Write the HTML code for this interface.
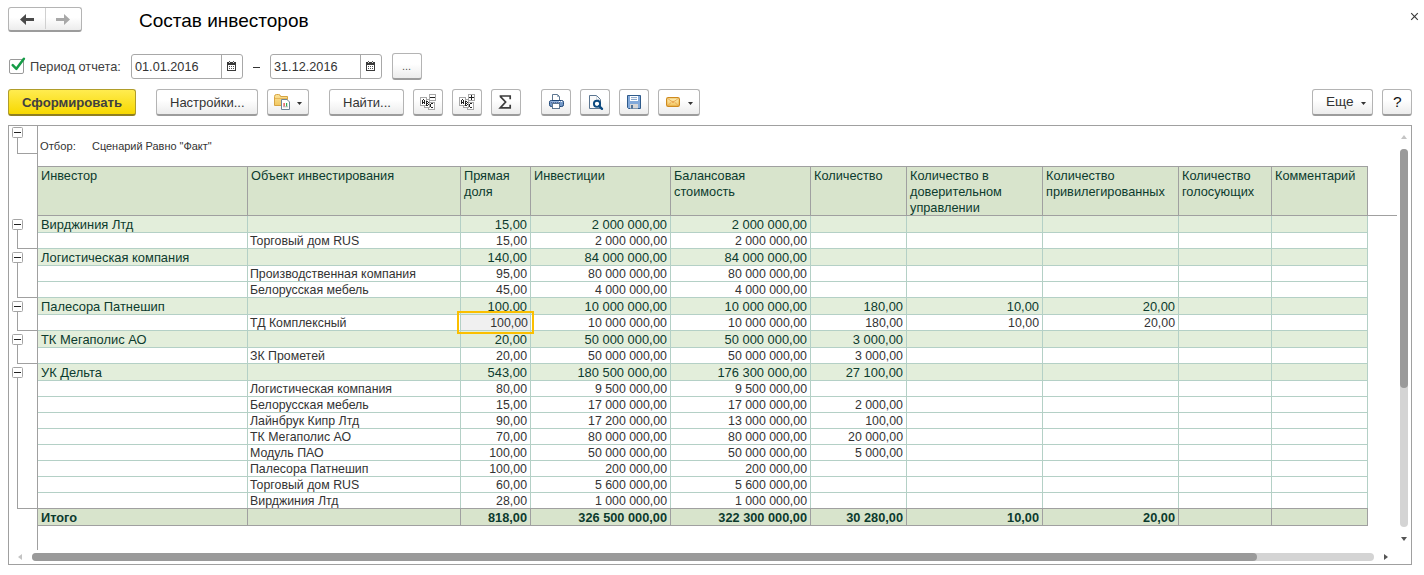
<!DOCTYPE html><html><head><meta charset="utf-8"><title>Состав инвесторов</title><style>
html,body{margin:0;padding:0}
body{width:1424px;height:575px;overflow:hidden;background:#fff;position:relative;font-family:"Liberation Sans",sans-serif}
.a{position:absolute}
.t{position:absolute;white-space:nowrap}
.btn{position:absolute;box-sizing:border-box;border:1px solid #b4b4b4;border-bottom:2px solid #9c9c9c;border-radius:3px;background:linear-gradient(#ffffff 0%,#ffffff 42%,#ececec 100%)}
.inp{position:absolute;box-sizing:border-box;border:1px solid #a8a8a8;border-radius:3px;background:#fff}
</style></head><body>
<div class="btn" style="left:8px;top:7px;width:74px;height:25px"></div>
<div class="a" style="left:45px;top:8px;width:1px;height:21px;background:#d0d0d0"></div>
<svg class="a" style="left:19px;top:13px" width="16" height="13" viewBox="0 0 16 13"><path d="M1 6.5 L7 1 V5 H15 V8 H7 V12 Z" fill="#4a4a4a"/></svg>
<svg class="a" style="left:55px;top:13px" width="16" height="13" viewBox="0 0 16 13"><path d="M15 6.5 L9 1 V5 H1 V8 H9 V12 Z" fill="#a8a8a8"/></svg>
<div class="t" style="left:139px;top:9.5px;font-size:19.0px;line-height:22px;color:#000;font-weight:normal;">Состав инвесторов</div>
<svg class="a" style="left:1410px;top:12px" width="10" height="10" viewBox="0 0 10 10"><path d="M1.2 1.2 L7.8 7.8 M7.8 1.2 L1.2 7.8" stroke="#3a3a3a" stroke-width="1.15"/></svg>
<div class="a" style="left:9px;top:59px;width:15px;height:15px;box-sizing:border-box;border:1px solid #9a9a9a;border-radius:2px;background:#fff"></div>
<svg class="a" style="left:10px;top:56px" width="17" height="17" viewBox="0 0 17 17"><path d="M2.7 9.1 L6.4 12.8 L13.9 2.8" stroke="#159c46" stroke-width="2.5" fill="none" stroke-linecap="round" stroke-linejoin="round"/></svg>
<div class="t" style="left:30px;top:59px;font-size:12.8px;line-height:16px;color:#404040;font-weight:normal;">Период отчета:</div>
<div class="inp" style="left:131px;top:54px;width:112px;height:25px"></div>
<div class="a" style="left:221px;top:55px;width:1px;height:23px;background:#a8a8a8"></div>
<div class="t" style="left:135px;top:59px;font-size:12.7px;line-height:16px;color:#333;font-weight:normal;">01.01.2016</div>
<svg class="a" style="left:227px;top:61px" width="9" height="10" viewBox="0 0 9 10" shape-rendering="crispEdges"><rect x="0" y="1" width="9" height="9" fill="#3a3a3a"/><rect x="1" y="4" width="7" height="5" fill="#fff"/><rect x="2" y="1" width="1" height="1" fill="#ddd"/><rect x="6" y="1" width="1" height="1" fill="#ddd"/><rect x="2" y="0" width="1" height="1" fill="#555"/><rect x="6" y="0" width="1" height="1" fill="#555"/><g fill="#555"><rect x="2" y="5" width="1" height="1"/><rect x="4" y="5" width="1" height="1"/><rect x="6" y="5" width="1" height="1"/><rect x="2" y="7" width="1" height="1"/><rect x="4" y="7" width="1" height="1"/><rect x="6" y="7" width="1" height="1"/></g></svg>
<div class="a" style="left:253px;top:67px;width:7px;height:1px;background:#333"></div>
<div class="inp" style="left:270px;top:54px;width:112px;height:25px"></div>
<div class="a" style="left:360px;top:55px;width:1px;height:23px;background:#a8a8a8"></div>
<div class="t" style="left:274px;top:59px;font-size:12.7px;line-height:16px;color:#333;font-weight:normal;">31.12.2016</div>
<svg class="a" style="left:366px;top:61px" width="9" height="10" viewBox="0 0 9 10" shape-rendering="crispEdges"><rect x="0" y="1" width="9" height="9" fill="#3a3a3a"/><rect x="1" y="4" width="7" height="5" fill="#fff"/><rect x="2" y="1" width="1" height="1" fill="#ddd"/><rect x="6" y="1" width="1" height="1" fill="#ddd"/><rect x="2" y="0" width="1" height="1" fill="#555"/><rect x="6" y="0" width="1" height="1" fill="#555"/><g fill="#555"><rect x="2" y="5" width="1" height="1"/><rect x="4" y="5" width="1" height="1"/><rect x="6" y="5" width="1" height="1"/><rect x="2" y="7" width="1" height="1"/><rect x="4" y="7" width="1" height="1"/><rect x="6" y="7" width="1" height="1"/></g></svg>
<div class="btn" style="left:392px;top:53px;width:30px;height:27px"></div>
<div class="t" style="left:402px;top:59px;font-size:11px;line-height:14px;color:#555;font-weight:normal;">...</div>
<div class="a" style="left:8px;top:89px;width:128px;height:27px;box-sizing:border-box;border:1px solid #b09d2a;border-bottom:2px solid #8f7f22;border-radius:3px;background:linear-gradient(#ffec50,#f7d800)"></div>
<div class="t" style="left:22px;top:95px;font-size:13.15px;line-height:16px;color:#404040;font-weight:bold;">Сформировать</div>
<div class="btn" style="left:156px;top:89px;height:27px;width:102px"></div>
<div class="t" style="left:170px;top:95px;font-size:13.0px;line-height:16px;color:#333;font-weight:normal;">Настройки...</div>
<div class="btn" style="left:267px;top:89px;height:27px;width:42px"></div>
<svg class="a" style="left:273px;top:93px" width="20" height="18" viewBox="0 0 20 18"><defs><linearGradient id="fg" x1="0" y1="0" x2="0" y2="1"><stop offset="0" stop-color="#fbe39a"/><stop offset="1" stop-color="#f1c75f"/></linearGradient></defs><path d="M1.5 3.5 Q1.5 1.5 3.5 1.5 H5.5 Q7.5 1.5 7.5 3.5 H14.5 V12.5 H1.5 Z" fill="url(#fg)" stroke="#d6a443"/><path d="M2 5.5 H14" stroke="#e2b050" stroke-width="0.8"/><path d="M8.5 6.5 H14 L16.5 9 V16.5 H8.5 Z" fill="#fff" stroke="#6f8699" stroke-linejoin="round"/><rect x="10.5" y="10" width="1.2" height="3.5" fill="#e23a3a"/><rect x="13" y="10" width="1.2" height="3.5" fill="#2fae52"/><rect x="10" y="13.5" width="5" height="0.7" fill="#999"/></svg>
<svg class="a" style="left:297px;top:102px" width="5" height="3" viewBox="0 0 5 3"><path d="M0 0 H5 L2.5 3Z" fill="#333"/></svg>
<div class="btn" style="left:329px;top:89px;height:27px;width:75px"></div>
<div class="t" style="left:343px;top:95px;font-size:13.0px;line-height:16px;color:#333;font-weight:normal;">Найти...</div>
<div class="btn" style="left:413px;top:89px;height:27px;width:30px"></div>
<div class="btn" style="left:452px;top:89px;height:27px;width:30px"></div>
<div class="btn" style="left:491px;top:89px;height:27px;width:30px"></div>
<svg class="a" style="left:418px;top:93px" width="19" height="18" viewBox="0 0 19 18" shape-rendering="crispEdges"><rect x="11.5" y="1.5" width="6" height="6" fill="#fff" stroke="#a8a8a8"/><rect x="12" y="4" width="5" height="1" fill="#222"/><rect x="10.5" y="9.5" width="6" height="7" fill="#fff" stroke="#a8a8a8"/><rect x="6.5" y="6.5" width="5" height="8" fill="#fff" stroke="#a8a8a8"/><rect x="2.5" y="4.5" width="6" height="8" fill="#fff" stroke="#a8a8a8"/><rect x="5" y="6" width="1" height="1" fill="#222"/><rect x="4" y="7" width="1" height="1" fill="#222"/><rect x="6" y="7" width="1" height="1" fill="#222"/><rect x="4" y="8" width="1" height="1" fill="#222"/><rect x="6" y="8" width="1" height="1" fill="#222"/><rect x="4" y="9" width="1" height="1" fill="#222"/><rect x="5" y="9" width="1" height="1" fill="#222"/><rect x="6" y="9" width="1" height="1" fill="#222"/><rect x="4" y="10" width="1" height="1" fill="#222"/><rect x="6" y="10" width="1" height="1" fill="#222"/><rect x="8" y="8" width="1" height="1" fill="#222"/><rect x="9" y="8" width="1" height="1" fill="#222"/><rect x="8" y="9" width="1" height="1" fill="#222"/><rect x="10" y="9" width="1" height="1" fill="#222"/><rect x="8" y="10" width="1" height="1" fill="#222"/><rect x="9" y="10" width="1" height="1" fill="#222"/><rect x="8" y="11" width="1" height="1" fill="#222"/><rect x="10" y="11" width="1" height="1" fill="#222"/><rect x="8" y="12" width="1" height="1" fill="#222"/><rect x="9" y="12" width="1" height="1" fill="#222"/><rect x="13" y="10" width="1" height="1" fill="#222"/><rect x="14" y="10" width="1" height="1" fill="#222"/><rect x="12" y="11" width="1" height="1" fill="#222"/><rect x="12" y="12" width="1" height="1" fill="#222"/><rect x="12" y="13" width="1" height="1" fill="#222"/><rect x="13" y="14" width="1" height="1" fill="#222"/><rect x="14" y="14" width="1" height="1" fill="#222"/></svg>
<svg class="a" style="left:457px;top:93px" width="19" height="18" viewBox="0 0 19 18" shape-rendering="crispEdges"><rect x="11.5" y="1.5" width="6" height="6" fill="#fff" stroke="#a8a8a8"/><rect x="12" y="4" width="5" height="1" fill="#222"/><rect x="14" y="2" width="1" height="5" fill="#222"/><rect x="10.5" y="9.5" width="6" height="7" fill="#fff" stroke="#a8a8a8"/><rect x="6.5" y="6.5" width="5" height="8" fill="#fff" stroke="#a8a8a8"/><rect x="2.5" y="4.5" width="6" height="8" fill="#fff" stroke="#a8a8a8"/><rect x="5" y="6" width="1" height="1" fill="#222"/><rect x="4" y="7" width="1" height="1" fill="#222"/><rect x="6" y="7" width="1" height="1" fill="#222"/><rect x="4" y="8" width="1" height="1" fill="#222"/><rect x="6" y="8" width="1" height="1" fill="#222"/><rect x="4" y="9" width="1" height="1" fill="#222"/><rect x="5" y="9" width="1" height="1" fill="#222"/><rect x="6" y="9" width="1" height="1" fill="#222"/><rect x="4" y="10" width="1" height="1" fill="#222"/><rect x="6" y="10" width="1" height="1" fill="#222"/><rect x="8" y="8" width="1" height="1" fill="#222"/><rect x="9" y="8" width="1" height="1" fill="#222"/><rect x="8" y="9" width="1" height="1" fill="#222"/><rect x="10" y="9" width="1" height="1" fill="#222"/><rect x="8" y="10" width="1" height="1" fill="#222"/><rect x="9" y="10" width="1" height="1" fill="#222"/><rect x="8" y="11" width="1" height="1" fill="#222"/><rect x="10" y="11" width="1" height="1" fill="#222"/><rect x="8" y="12" width="1" height="1" fill="#222"/><rect x="9" y="12" width="1" height="1" fill="#222"/><rect x="13" y="10" width="1" height="1" fill="#222"/><rect x="14" y="10" width="1" height="1" fill="#222"/><rect x="12" y="11" width="1" height="1" fill="#222"/><rect x="12" y="12" width="1" height="1" fill="#222"/><rect x="12" y="13" width="1" height="1" fill="#222"/><rect x="13" y="14" width="1" height="1" fill="#222"/><rect x="14" y="14" width="1" height="1" fill="#222"/></svg>
<svg class="a" style="left:497px;top:94px" width="16" height="16" viewBox="0 0 16 16"><path d="M2.6 2 H13.2 V5.2 M3.2 2.3 L8.6 8 L3.2 13.9 H13.2 V10.8" stroke="#3c3c3c" stroke-width="1.7" fill="none" stroke-linejoin="miter"/></svg>
<div class="btn" style="left:541px;top:89px;height:27px;width:30px"></div>
<div class="btn" style="left:580px;top:89px;height:27px;width:30px"></div>
<div class="btn" style="left:619px;top:89px;height:27px;width:30px"></div>
<svg class="a" style="left:548px;top:94px" width="16" height="16" viewBox="0 0 16 16"><path d="M4.5 0.5 H9.5 L11.5 2.5 V6.5 H4.5 Z" fill="#fff" stroke="#5d7690"/><path d="M9.5 0.5 V2.5 H11.5" fill="none" stroke="#7d94ab" stroke-width="0.8"/><rect x="1.5" y="6.5" width="14" height="6" rx="1.8" fill="#7499c8" stroke="#1e4677"/><rect x="2.3" y="7.2" width="12.4" height="1" fill="#9dbbe0"/><path d="M3 8.6 H13" stroke="#3d4f86" stroke-width="0.8" stroke-dasharray="1 1"/><rect x="11" y="7" width="1" height="1" fill="#fff"/><rect x="13" y="7" width="1" height="1" fill="#fff"/><rect x="4.5" y="9.5" width="7" height="5" fill="#fff" stroke="#5d7690"/></svg>
<svg class="a" style="left:584px;top:91px" width="22" height="22" viewBox="0 0 22 22"><path d="M5.5 4.5 H12.5 L16.5 8.5 V17.5 H5.5 Z" fill="#fafafa" stroke="#5b7590"/><path d="M12.5 4.8 V8.5 H16.2" fill="none" stroke="#9fb2c4" stroke-width="0.8" stroke-dasharray="1 0.8"/><circle cx="13" cy="12.8" r="3.1" fill="#fff" stroke="#0b4a80" stroke-width="1.9"/><path d="M15.2 15.1 L18 17.9" stroke="#0b4a80" stroke-width="2.3" stroke-linecap="round"/></svg>
<svg class="a" style="left:627px;top:95px" width="14" height="14" viewBox="0 0 14 14"><path d="M0.5 0.5 H13.5 V13.5 H1.5 L0.5 12.5 Z" fill="#82a9da" stroke="#2e5a8a"/><rect x="3" y="1" width="8" height="5" fill="#fff"/><rect x="4" y="2.2" width="6" height="0.9" fill="#7c9cc4"/><rect x="4" y="4" width="6" height="0.9" fill="#7c9cc4"/><rect x="3" y="9" width="8" height="4.5" fill="#d6d6d6"/><rect x="4.2" y="10" width="1.6" height="3.5" fill="#2e5a8a"/></svg>
<div class="btn" style="left:658px;top:89px;height:27px;width:42px"></div>
<svg class="a" style="left:666px;top:97px" width="14" height="10" viewBox="0 0 14 10"><defs><linearGradient id="mg" x1="0" y1="0" x2="0" y2="1"><stop offset="0" stop-color="#fff1b8"/><stop offset="1" stop-color="#f3c25a"/></linearGradient></defs><rect x="0.6" y="0.6" width="12.8" height="8.8" rx="1.6" fill="url(#mg)" stroke="#cf8a1e" stroke-width="1.2"/><path d="M2 1.8 L7 5.2 L12 1.8 M2 8.4 L5.4 5.2 M12 8.4 L8.6 5.2" stroke="#e2a050" stroke-width="0.8" fill="none"/><circle cx="7" cy="5" r="0.9" fill="#e9a04a"/></svg>
<svg class="a" style="left:688px;top:102px" width="5" height="3" viewBox="0 0 5 3"><path d="M0 0 H5 L2.5 3Z" fill="#333"/></svg>
<div class="btn" style="left:1312px;top:89px;height:27px;width:61px"></div>
<div class="t" style="left:1326px;top:94px;font-size:13.6px;line-height:16px;color:#333;font-weight:normal;">Еще</div>
<svg class="a" style="left:1361px;top:102px" width="5" height="3" viewBox="0 0 5 3"><path d="M0 0 H5 L2.5 3Z" fill="#333"/></svg>
<div class="btn" style="left:1382px;top:89px;height:27px;width:30px"></div>
<div class="t" style="left:1393px;top:94px;font-size:15.5px;line-height:16px;color:#111;font-weight:normal;">?</div>
<div class="a" style="left:8px;top:125px;width:1404px;height:440px;box-sizing:border-box;border:1px solid #a0a0a0"></div>
<div class="a" style="left:37px;top:125px;width:1px;height:425px;background:#a0a0a0"></div>
<div class="a" style="left:12px;top:127px;width:11px;height:11px;box-sizing:border-box;border:1px solid #a4a4a4;border-radius:1.5px;background:#fff"></div>
<div class="a" style="left:14px;top:132px;width:7px;height:1px;background:#222"></div>
<div class="a" style="left:17px;top:138px;width:1px;height:16px;background:#a0a0a0"></div>
<div class="a" style="left:17px;top:153px;width:20px;height:1px;background:#a0a0a0"></div>
<div class="t" style="left:40px;top:139px;font-size:11.2px;line-height:14px;color:#333;font-weight:normal;">Отбор:</div>
<div class="t" style="left:92px;top:139px;font-size:10.95px;line-height:14px;color:#333;font-weight:normal;">Сценарий Равно &quot;Факт&quot;</div>
<div class="a" style="left:37px;top:166px;width:1330px;height:50px;background:#d8e4cc"></div>
<div class="a" style="left:37px;top:166px;width:1331px;height:1px;background:#a0a0a0"></div>
<div class="a" style="left:37px;top:215px;width:1360px;height:1px;background:#a0a0a0"></div>
<div class="a" style="left:37px;top:166px;width:1px;height:50px;background:#a0a0a0"></div>
<div class="a" style="left:247px;top:166px;width:1px;height:50px;background:#a0a0a0"></div>
<div class="a" style="left:460px;top:166px;width:1px;height:50px;background:#a0a0a0"></div>
<div class="a" style="left:530px;top:166px;width:1px;height:50px;background:#a0a0a0"></div>
<div class="a" style="left:670px;top:166px;width:1px;height:50px;background:#a0a0a0"></div>
<div class="a" style="left:810px;top:166px;width:1px;height:50px;background:#a0a0a0"></div>
<div class="a" style="left:906px;top:166px;width:1px;height:50px;background:#a0a0a0"></div>
<div class="a" style="left:1042px;top:166px;width:1px;height:50px;background:#a0a0a0"></div>
<div class="a" style="left:1178px;top:166px;width:1px;height:50px;background:#a0a0a0"></div>
<div class="a" style="left:1271px;top:166px;width:1px;height:50px;background:#a0a0a0"></div>
<div class="a" style="left:1367px;top:166px;width:1px;height:50px;background:#a0a0a0"></div>
<div class="t" style="left:41px;top:168px;font-size:12.75px;line-height:16px;color:#0c3b2e">Инвестор</div>
<div class="t" style="left:251px;top:168px;font-size:12.75px;line-height:16px;color:#0c3b2e">Объект инвестирования</div>
<div class="t" style="left:464px;top:168px;font-size:12.75px;line-height:16px;color:#0c3b2e">Прямая<br>доля</div>
<div class="t" style="left:534px;top:168px;font-size:12.75px;line-height:16px;color:#0c3b2e">Инвестиции</div>
<div class="t" style="left:674px;top:168px;font-size:12.75px;line-height:16px;color:#0c3b2e">Балансовая<br>стоимость</div>
<div class="t" style="left:814px;top:168px;font-size:12.75px;line-height:16px;color:#0c3b2e">Количество</div>
<div class="t" style="left:910px;top:168px;font-size:12.75px;line-height:16px;color:#0c3b2e">Количество в<br>доверительном<br>управлении</div>
<div class="t" style="left:1046px;top:168px;font-size:12.75px;line-height:16px;color:#0c3b2e">Количество<br>привилегированных</div>
<div class="t" style="left:1182px;top:168px;font-size:12.75px;line-height:16px;color:#0c3b2e">Количество<br>голосующих</div>
<div class="t" style="left:1275px;top:168px;font-size:12.75px;line-height:16px;color:#0c3b2e">Комментарий</div>
<div class="a" style="left:38px;top:216px;width:1329px;height:16px;background:#e3eedb"></div>
<div class="a" style="left:38px;top:232px;width:1330px;height:1px;background:#b4d0c6"></div>
<div class="a" style="left:247px;top:216px;width:1px;height:16px;background:#b4d0c6"></div>
<div class="a" style="left:460px;top:216px;width:1px;height:16px;background:#b4d0c6"></div>
<div class="a" style="left:530px;top:216px;width:1px;height:16px;background:#b4d0c6"></div>
<div class="a" style="left:670px;top:216px;width:1px;height:16px;background:#b4d0c6"></div>
<div class="a" style="left:810px;top:216px;width:1px;height:16px;background:#b4d0c6"></div>
<div class="a" style="left:906px;top:216px;width:1px;height:16px;background:#b4d0c6"></div>
<div class="a" style="left:1042px;top:216px;width:1px;height:16px;background:#b4d0c6"></div>
<div class="a" style="left:1178px;top:216px;width:1px;height:16px;background:#b4d0c6"></div>
<div class="a" style="left:1271px;top:216px;width:1px;height:16px;background:#b4d0c6"></div>
<div class="a" style="left:1367px;top:216px;width:1px;height:16px;background:#b4d0c6"></div>
<div class="t" style="left:41px;top:217px;font-size:12.9px;line-height:16px;color:#0c3b2e;font-weight:normal;">Вирджиния Лтд</div>
<div class="t" style="right:897px;top:217px;font-size:12.9px;line-height:16px;color:#0c3b2e;font-weight:normal;text-align:right">15,00</div>
<div class="t" style="right:757px;top:217px;font-size:12.9px;line-height:16px;color:#0c3b2e;font-weight:normal;text-align:right">2 000 000,00</div>
<div class="t" style="right:617px;top:217px;font-size:12.9px;line-height:16px;color:#0c3b2e;font-weight:normal;text-align:right">2 000 000,00</div>
<div class="a" style="left:38px;top:248px;width:1330px;height:1px;background:#b4d0c6"></div>
<div class="a" style="left:247px;top:233px;width:1px;height:15px;background:#b4d0c6"></div>
<div class="a" style="left:460px;top:233px;width:1px;height:15px;background:#b4d0c6"></div>
<div class="a" style="left:530px;top:233px;width:1px;height:15px;background:#b4d0c6"></div>
<div class="a" style="left:670px;top:233px;width:1px;height:15px;background:#b4d0c6"></div>
<div class="a" style="left:810px;top:233px;width:1px;height:15px;background:#b4d0c6"></div>
<div class="a" style="left:906px;top:233px;width:1px;height:15px;background:#b4d0c6"></div>
<div class="a" style="left:1042px;top:233px;width:1px;height:15px;background:#b4d0c6"></div>
<div class="a" style="left:1178px;top:233px;width:1px;height:15px;background:#b4d0c6"></div>
<div class="a" style="left:1271px;top:233px;width:1px;height:15px;background:#b4d0c6"></div>
<div class="a" style="left:1367px;top:233px;width:1px;height:15px;background:#b4d0c6"></div>
<div class="t" style="left:250px;top:234px;font-size:12.35px;line-height:15px;color:#333333;font-weight:normal;">Торговый дом RUS</div>
<div class="t" style="right:897px;top:234px;font-size:12.35px;line-height:15px;color:#333333;font-weight:normal;text-align:right">15,00</div>
<div class="t" style="right:757px;top:234px;font-size:12.35px;line-height:15px;color:#333333;font-weight:normal;text-align:right">2 000 000,00</div>
<div class="t" style="right:617px;top:234px;font-size:12.35px;line-height:15px;color:#333333;font-weight:normal;text-align:right">2 000 000,00</div>
<div class="a" style="left:38px;top:249px;width:1329px;height:16px;background:#e3eedb"></div>
<div class="a" style="left:38px;top:265px;width:1330px;height:1px;background:#b4d0c6"></div>
<div class="a" style="left:247px;top:249px;width:1px;height:16px;background:#b4d0c6"></div>
<div class="a" style="left:460px;top:249px;width:1px;height:16px;background:#b4d0c6"></div>
<div class="a" style="left:530px;top:249px;width:1px;height:16px;background:#b4d0c6"></div>
<div class="a" style="left:670px;top:249px;width:1px;height:16px;background:#b4d0c6"></div>
<div class="a" style="left:810px;top:249px;width:1px;height:16px;background:#b4d0c6"></div>
<div class="a" style="left:906px;top:249px;width:1px;height:16px;background:#b4d0c6"></div>
<div class="a" style="left:1042px;top:249px;width:1px;height:16px;background:#b4d0c6"></div>
<div class="a" style="left:1178px;top:249px;width:1px;height:16px;background:#b4d0c6"></div>
<div class="a" style="left:1271px;top:249px;width:1px;height:16px;background:#b4d0c6"></div>
<div class="a" style="left:1367px;top:249px;width:1px;height:16px;background:#b4d0c6"></div>
<div class="t" style="left:41px;top:250px;font-size:12.9px;line-height:16px;color:#0c3b2e;font-weight:normal;">Логистическая компания</div>
<div class="t" style="right:897px;top:250px;font-size:12.9px;line-height:16px;color:#0c3b2e;font-weight:normal;text-align:right">140,00</div>
<div class="t" style="right:757px;top:250px;font-size:12.9px;line-height:16px;color:#0c3b2e;font-weight:normal;text-align:right">84 000 000,00</div>
<div class="t" style="right:617px;top:250px;font-size:12.9px;line-height:16px;color:#0c3b2e;font-weight:normal;text-align:right">84 000 000,00</div>
<div class="a" style="left:38px;top:281px;width:1330px;height:1px;background:#b4d0c6"></div>
<div class="a" style="left:247px;top:266px;width:1px;height:15px;background:#b4d0c6"></div>
<div class="a" style="left:460px;top:266px;width:1px;height:15px;background:#b4d0c6"></div>
<div class="a" style="left:530px;top:266px;width:1px;height:15px;background:#b4d0c6"></div>
<div class="a" style="left:670px;top:266px;width:1px;height:15px;background:#b4d0c6"></div>
<div class="a" style="left:810px;top:266px;width:1px;height:15px;background:#b4d0c6"></div>
<div class="a" style="left:906px;top:266px;width:1px;height:15px;background:#b4d0c6"></div>
<div class="a" style="left:1042px;top:266px;width:1px;height:15px;background:#b4d0c6"></div>
<div class="a" style="left:1178px;top:266px;width:1px;height:15px;background:#b4d0c6"></div>
<div class="a" style="left:1271px;top:266px;width:1px;height:15px;background:#b4d0c6"></div>
<div class="a" style="left:1367px;top:266px;width:1px;height:15px;background:#b4d0c6"></div>
<div class="t" style="left:250px;top:267px;font-size:12.35px;line-height:15px;color:#333333;font-weight:normal;">Производственная компания</div>
<div class="t" style="right:897px;top:267px;font-size:12.35px;line-height:15px;color:#333333;font-weight:normal;text-align:right">95,00</div>
<div class="t" style="right:757px;top:267px;font-size:12.35px;line-height:15px;color:#333333;font-weight:normal;text-align:right">80 000 000,00</div>
<div class="t" style="right:617px;top:267px;font-size:12.35px;line-height:15px;color:#333333;font-weight:normal;text-align:right">80 000 000,00</div>
<div class="a" style="left:38px;top:297px;width:1330px;height:1px;background:#b4d0c6"></div>
<div class="a" style="left:247px;top:282px;width:1px;height:15px;background:#b4d0c6"></div>
<div class="a" style="left:460px;top:282px;width:1px;height:15px;background:#b4d0c6"></div>
<div class="a" style="left:530px;top:282px;width:1px;height:15px;background:#b4d0c6"></div>
<div class="a" style="left:670px;top:282px;width:1px;height:15px;background:#b4d0c6"></div>
<div class="a" style="left:810px;top:282px;width:1px;height:15px;background:#b4d0c6"></div>
<div class="a" style="left:906px;top:282px;width:1px;height:15px;background:#b4d0c6"></div>
<div class="a" style="left:1042px;top:282px;width:1px;height:15px;background:#b4d0c6"></div>
<div class="a" style="left:1178px;top:282px;width:1px;height:15px;background:#b4d0c6"></div>
<div class="a" style="left:1271px;top:282px;width:1px;height:15px;background:#b4d0c6"></div>
<div class="a" style="left:1367px;top:282px;width:1px;height:15px;background:#b4d0c6"></div>
<div class="t" style="left:250px;top:283px;font-size:12.35px;line-height:15px;color:#333333;font-weight:normal;">Белорусская мебель</div>
<div class="t" style="right:897px;top:283px;font-size:12.35px;line-height:15px;color:#333333;font-weight:normal;text-align:right">45,00</div>
<div class="t" style="right:757px;top:283px;font-size:12.35px;line-height:15px;color:#333333;font-weight:normal;text-align:right">4 000 000,00</div>
<div class="t" style="right:617px;top:283px;font-size:12.35px;line-height:15px;color:#333333;font-weight:normal;text-align:right">4 000 000,00</div>
<div class="a" style="left:38px;top:298px;width:1329px;height:16px;background:#e3eedb"></div>
<div class="a" style="left:38px;top:314px;width:1330px;height:1px;background:#b4d0c6"></div>
<div class="a" style="left:247px;top:298px;width:1px;height:16px;background:#b4d0c6"></div>
<div class="a" style="left:460px;top:298px;width:1px;height:16px;background:#b4d0c6"></div>
<div class="a" style="left:530px;top:298px;width:1px;height:16px;background:#b4d0c6"></div>
<div class="a" style="left:670px;top:298px;width:1px;height:16px;background:#b4d0c6"></div>
<div class="a" style="left:810px;top:298px;width:1px;height:16px;background:#b4d0c6"></div>
<div class="a" style="left:906px;top:298px;width:1px;height:16px;background:#b4d0c6"></div>
<div class="a" style="left:1042px;top:298px;width:1px;height:16px;background:#b4d0c6"></div>
<div class="a" style="left:1178px;top:298px;width:1px;height:16px;background:#b4d0c6"></div>
<div class="a" style="left:1271px;top:298px;width:1px;height:16px;background:#b4d0c6"></div>
<div class="a" style="left:1367px;top:298px;width:1px;height:16px;background:#b4d0c6"></div>
<div class="t" style="left:41px;top:299px;font-size:12.9px;line-height:16px;color:#0c3b2e;font-weight:normal;">Палесора Патнешип</div>
<div class="t" style="right:897px;top:299px;font-size:12.9px;line-height:16px;color:#0c3b2e;font-weight:normal;text-align:right">100,00</div>
<div class="t" style="right:757px;top:299px;font-size:12.9px;line-height:16px;color:#0c3b2e;font-weight:normal;text-align:right">10 000 000,00</div>
<div class="t" style="right:617px;top:299px;font-size:12.9px;line-height:16px;color:#0c3b2e;font-weight:normal;text-align:right">10 000 000,00</div>
<div class="t" style="right:521px;top:299px;font-size:12.9px;line-height:16px;color:#0c3b2e;font-weight:normal;text-align:right">180,00</div>
<div class="t" style="right:385px;top:299px;font-size:12.9px;line-height:16px;color:#0c3b2e;font-weight:normal;text-align:right">10,00</div>
<div class="t" style="right:249px;top:299px;font-size:12.9px;line-height:16px;color:#0c3b2e;font-weight:normal;text-align:right">20,00</div>
<div class="a" style="left:38px;top:330px;width:1330px;height:1px;background:#b4d0c6"></div>
<div class="a" style="left:247px;top:315px;width:1px;height:15px;background:#b4d0c6"></div>
<div class="a" style="left:460px;top:315px;width:1px;height:15px;background:#b4d0c6"></div>
<div class="a" style="left:530px;top:315px;width:1px;height:15px;background:#b4d0c6"></div>
<div class="a" style="left:670px;top:315px;width:1px;height:15px;background:#b4d0c6"></div>
<div class="a" style="left:810px;top:315px;width:1px;height:15px;background:#b4d0c6"></div>
<div class="a" style="left:906px;top:315px;width:1px;height:15px;background:#b4d0c6"></div>
<div class="a" style="left:1042px;top:315px;width:1px;height:15px;background:#b4d0c6"></div>
<div class="a" style="left:1178px;top:315px;width:1px;height:15px;background:#b4d0c6"></div>
<div class="a" style="left:1271px;top:315px;width:1px;height:15px;background:#b4d0c6"></div>
<div class="a" style="left:1367px;top:315px;width:1px;height:15px;background:#b4d0c6"></div>
<div class="t" style="left:250px;top:316px;font-size:12.35px;line-height:15px;color:#333333;font-weight:normal;">ТД Комплексный</div>
<div class="t" style="right:897px;top:316px;font-size:12.35px;line-height:15px;color:#333333;font-weight:normal;text-align:right">100,00</div>
<div class="t" style="right:757px;top:316px;font-size:12.35px;line-height:15px;color:#333333;font-weight:normal;text-align:right">10 000 000,00</div>
<div class="t" style="right:617px;top:316px;font-size:12.35px;line-height:15px;color:#333333;font-weight:normal;text-align:right">10 000 000,00</div>
<div class="t" style="right:521px;top:316px;font-size:12.35px;line-height:15px;color:#333333;font-weight:normal;text-align:right">180,00</div>
<div class="t" style="right:385px;top:316px;font-size:12.35px;line-height:15px;color:#333333;font-weight:normal;text-align:right">10,00</div>
<div class="t" style="right:249px;top:316px;font-size:12.35px;line-height:15px;color:#333333;font-weight:normal;text-align:right">20,00</div>
<div class="a" style="left:38px;top:331px;width:1329px;height:16px;background:#e3eedb"></div>
<div class="a" style="left:38px;top:347px;width:1330px;height:1px;background:#b4d0c6"></div>
<div class="a" style="left:247px;top:331px;width:1px;height:16px;background:#b4d0c6"></div>
<div class="a" style="left:460px;top:331px;width:1px;height:16px;background:#b4d0c6"></div>
<div class="a" style="left:530px;top:331px;width:1px;height:16px;background:#b4d0c6"></div>
<div class="a" style="left:670px;top:331px;width:1px;height:16px;background:#b4d0c6"></div>
<div class="a" style="left:810px;top:331px;width:1px;height:16px;background:#b4d0c6"></div>
<div class="a" style="left:906px;top:331px;width:1px;height:16px;background:#b4d0c6"></div>
<div class="a" style="left:1042px;top:331px;width:1px;height:16px;background:#b4d0c6"></div>
<div class="a" style="left:1178px;top:331px;width:1px;height:16px;background:#b4d0c6"></div>
<div class="a" style="left:1271px;top:331px;width:1px;height:16px;background:#b4d0c6"></div>
<div class="a" style="left:1367px;top:331px;width:1px;height:16px;background:#b4d0c6"></div>
<div class="t" style="left:41px;top:332px;font-size:12.9px;line-height:16px;color:#0c3b2e;font-weight:normal;">ТК Мегаполис АО</div>
<div class="t" style="right:897px;top:332px;font-size:12.9px;line-height:16px;color:#0c3b2e;font-weight:normal;text-align:right">20,00</div>
<div class="t" style="right:757px;top:332px;font-size:12.9px;line-height:16px;color:#0c3b2e;font-weight:normal;text-align:right">50 000 000,00</div>
<div class="t" style="right:617px;top:332px;font-size:12.9px;line-height:16px;color:#0c3b2e;font-weight:normal;text-align:right">50 000 000,00</div>
<div class="t" style="right:521px;top:332px;font-size:12.9px;line-height:16px;color:#0c3b2e;font-weight:normal;text-align:right">3 000,00</div>
<div class="a" style="left:38px;top:363px;width:1330px;height:1px;background:#b4d0c6"></div>
<div class="a" style="left:247px;top:348px;width:1px;height:15px;background:#b4d0c6"></div>
<div class="a" style="left:460px;top:348px;width:1px;height:15px;background:#b4d0c6"></div>
<div class="a" style="left:530px;top:348px;width:1px;height:15px;background:#b4d0c6"></div>
<div class="a" style="left:670px;top:348px;width:1px;height:15px;background:#b4d0c6"></div>
<div class="a" style="left:810px;top:348px;width:1px;height:15px;background:#b4d0c6"></div>
<div class="a" style="left:906px;top:348px;width:1px;height:15px;background:#b4d0c6"></div>
<div class="a" style="left:1042px;top:348px;width:1px;height:15px;background:#b4d0c6"></div>
<div class="a" style="left:1178px;top:348px;width:1px;height:15px;background:#b4d0c6"></div>
<div class="a" style="left:1271px;top:348px;width:1px;height:15px;background:#b4d0c6"></div>
<div class="a" style="left:1367px;top:348px;width:1px;height:15px;background:#b4d0c6"></div>
<div class="t" style="left:250px;top:349px;font-size:12.35px;line-height:15px;color:#333333;font-weight:normal;">ЗК Прометей</div>
<div class="t" style="right:897px;top:349px;font-size:12.35px;line-height:15px;color:#333333;font-weight:normal;text-align:right">20,00</div>
<div class="t" style="right:757px;top:349px;font-size:12.35px;line-height:15px;color:#333333;font-weight:normal;text-align:right">50 000 000,00</div>
<div class="t" style="right:617px;top:349px;font-size:12.35px;line-height:15px;color:#333333;font-weight:normal;text-align:right">50 000 000,00</div>
<div class="t" style="right:521px;top:349px;font-size:12.35px;line-height:15px;color:#333333;font-weight:normal;text-align:right">3 000,00</div>
<div class="a" style="left:38px;top:364px;width:1329px;height:16px;background:#e3eedb"></div>
<div class="a" style="left:38px;top:380px;width:1330px;height:1px;background:#b4d0c6"></div>
<div class="a" style="left:247px;top:364px;width:1px;height:16px;background:#b4d0c6"></div>
<div class="a" style="left:460px;top:364px;width:1px;height:16px;background:#b4d0c6"></div>
<div class="a" style="left:530px;top:364px;width:1px;height:16px;background:#b4d0c6"></div>
<div class="a" style="left:670px;top:364px;width:1px;height:16px;background:#b4d0c6"></div>
<div class="a" style="left:810px;top:364px;width:1px;height:16px;background:#b4d0c6"></div>
<div class="a" style="left:906px;top:364px;width:1px;height:16px;background:#b4d0c6"></div>
<div class="a" style="left:1042px;top:364px;width:1px;height:16px;background:#b4d0c6"></div>
<div class="a" style="left:1178px;top:364px;width:1px;height:16px;background:#b4d0c6"></div>
<div class="a" style="left:1271px;top:364px;width:1px;height:16px;background:#b4d0c6"></div>
<div class="a" style="left:1367px;top:364px;width:1px;height:16px;background:#b4d0c6"></div>
<div class="t" style="left:41px;top:365px;font-size:12.9px;line-height:16px;color:#0c3b2e;font-weight:normal;">УК Дельта</div>
<div class="t" style="right:897px;top:365px;font-size:12.9px;line-height:16px;color:#0c3b2e;font-weight:normal;text-align:right">543,00</div>
<div class="t" style="right:757px;top:365px;font-size:12.9px;line-height:16px;color:#0c3b2e;font-weight:normal;text-align:right">180 500 000,00</div>
<div class="t" style="right:617px;top:365px;font-size:12.9px;line-height:16px;color:#0c3b2e;font-weight:normal;text-align:right">176 300 000,00</div>
<div class="t" style="right:521px;top:365px;font-size:12.9px;line-height:16px;color:#0c3b2e;font-weight:normal;text-align:right">27 100,00</div>
<div class="a" style="left:38px;top:396px;width:1330px;height:1px;background:#b4d0c6"></div>
<div class="a" style="left:247px;top:381px;width:1px;height:15px;background:#b4d0c6"></div>
<div class="a" style="left:460px;top:381px;width:1px;height:15px;background:#b4d0c6"></div>
<div class="a" style="left:530px;top:381px;width:1px;height:15px;background:#b4d0c6"></div>
<div class="a" style="left:670px;top:381px;width:1px;height:15px;background:#b4d0c6"></div>
<div class="a" style="left:810px;top:381px;width:1px;height:15px;background:#b4d0c6"></div>
<div class="a" style="left:906px;top:381px;width:1px;height:15px;background:#b4d0c6"></div>
<div class="a" style="left:1042px;top:381px;width:1px;height:15px;background:#b4d0c6"></div>
<div class="a" style="left:1178px;top:381px;width:1px;height:15px;background:#b4d0c6"></div>
<div class="a" style="left:1271px;top:381px;width:1px;height:15px;background:#b4d0c6"></div>
<div class="a" style="left:1367px;top:381px;width:1px;height:15px;background:#b4d0c6"></div>
<div class="t" style="left:250px;top:382px;font-size:12.35px;line-height:15px;color:#333333;font-weight:normal;">Логистическая компания</div>
<div class="t" style="right:897px;top:382px;font-size:12.35px;line-height:15px;color:#333333;font-weight:normal;text-align:right">80,00</div>
<div class="t" style="right:757px;top:382px;font-size:12.35px;line-height:15px;color:#333333;font-weight:normal;text-align:right">9 500 000,00</div>
<div class="t" style="right:617px;top:382px;font-size:12.35px;line-height:15px;color:#333333;font-weight:normal;text-align:right">9 500 000,00</div>
<div class="a" style="left:38px;top:412px;width:1330px;height:1px;background:#b4d0c6"></div>
<div class="a" style="left:247px;top:397px;width:1px;height:15px;background:#b4d0c6"></div>
<div class="a" style="left:460px;top:397px;width:1px;height:15px;background:#b4d0c6"></div>
<div class="a" style="left:530px;top:397px;width:1px;height:15px;background:#b4d0c6"></div>
<div class="a" style="left:670px;top:397px;width:1px;height:15px;background:#b4d0c6"></div>
<div class="a" style="left:810px;top:397px;width:1px;height:15px;background:#b4d0c6"></div>
<div class="a" style="left:906px;top:397px;width:1px;height:15px;background:#b4d0c6"></div>
<div class="a" style="left:1042px;top:397px;width:1px;height:15px;background:#b4d0c6"></div>
<div class="a" style="left:1178px;top:397px;width:1px;height:15px;background:#b4d0c6"></div>
<div class="a" style="left:1271px;top:397px;width:1px;height:15px;background:#b4d0c6"></div>
<div class="a" style="left:1367px;top:397px;width:1px;height:15px;background:#b4d0c6"></div>
<div class="t" style="left:250px;top:398px;font-size:12.35px;line-height:15px;color:#333333;font-weight:normal;">Белорусская мебель</div>
<div class="t" style="right:897px;top:398px;font-size:12.35px;line-height:15px;color:#333333;font-weight:normal;text-align:right">15,00</div>
<div class="t" style="right:757px;top:398px;font-size:12.35px;line-height:15px;color:#333333;font-weight:normal;text-align:right">17 000 000,00</div>
<div class="t" style="right:617px;top:398px;font-size:12.35px;line-height:15px;color:#333333;font-weight:normal;text-align:right">17 000 000,00</div>
<div class="t" style="right:521px;top:398px;font-size:12.35px;line-height:15px;color:#333333;font-weight:normal;text-align:right">2 000,00</div>
<div class="a" style="left:38px;top:428px;width:1330px;height:1px;background:#b4d0c6"></div>
<div class="a" style="left:247px;top:413px;width:1px;height:15px;background:#b4d0c6"></div>
<div class="a" style="left:460px;top:413px;width:1px;height:15px;background:#b4d0c6"></div>
<div class="a" style="left:530px;top:413px;width:1px;height:15px;background:#b4d0c6"></div>
<div class="a" style="left:670px;top:413px;width:1px;height:15px;background:#b4d0c6"></div>
<div class="a" style="left:810px;top:413px;width:1px;height:15px;background:#b4d0c6"></div>
<div class="a" style="left:906px;top:413px;width:1px;height:15px;background:#b4d0c6"></div>
<div class="a" style="left:1042px;top:413px;width:1px;height:15px;background:#b4d0c6"></div>
<div class="a" style="left:1178px;top:413px;width:1px;height:15px;background:#b4d0c6"></div>
<div class="a" style="left:1271px;top:413px;width:1px;height:15px;background:#b4d0c6"></div>
<div class="a" style="left:1367px;top:413px;width:1px;height:15px;background:#b4d0c6"></div>
<div class="t" style="left:250px;top:414px;font-size:12.35px;line-height:15px;color:#333333;font-weight:normal;">Лайнбрук Кипр Лтд</div>
<div class="t" style="right:897px;top:414px;font-size:12.35px;line-height:15px;color:#333333;font-weight:normal;text-align:right">90,00</div>
<div class="t" style="right:757px;top:414px;font-size:12.35px;line-height:15px;color:#333333;font-weight:normal;text-align:right">17 200 000,00</div>
<div class="t" style="right:617px;top:414px;font-size:12.35px;line-height:15px;color:#333333;font-weight:normal;text-align:right">13 000 000,00</div>
<div class="t" style="right:521px;top:414px;font-size:12.35px;line-height:15px;color:#333333;font-weight:normal;text-align:right">100,00</div>
<div class="a" style="left:38px;top:444px;width:1330px;height:1px;background:#b4d0c6"></div>
<div class="a" style="left:247px;top:429px;width:1px;height:15px;background:#b4d0c6"></div>
<div class="a" style="left:460px;top:429px;width:1px;height:15px;background:#b4d0c6"></div>
<div class="a" style="left:530px;top:429px;width:1px;height:15px;background:#b4d0c6"></div>
<div class="a" style="left:670px;top:429px;width:1px;height:15px;background:#b4d0c6"></div>
<div class="a" style="left:810px;top:429px;width:1px;height:15px;background:#b4d0c6"></div>
<div class="a" style="left:906px;top:429px;width:1px;height:15px;background:#b4d0c6"></div>
<div class="a" style="left:1042px;top:429px;width:1px;height:15px;background:#b4d0c6"></div>
<div class="a" style="left:1178px;top:429px;width:1px;height:15px;background:#b4d0c6"></div>
<div class="a" style="left:1271px;top:429px;width:1px;height:15px;background:#b4d0c6"></div>
<div class="a" style="left:1367px;top:429px;width:1px;height:15px;background:#b4d0c6"></div>
<div class="t" style="left:250px;top:430px;font-size:12.35px;line-height:15px;color:#333333;font-weight:normal;">ТК Мегаполис АО</div>
<div class="t" style="right:897px;top:430px;font-size:12.35px;line-height:15px;color:#333333;font-weight:normal;text-align:right">70,00</div>
<div class="t" style="right:757px;top:430px;font-size:12.35px;line-height:15px;color:#333333;font-weight:normal;text-align:right">80 000 000,00</div>
<div class="t" style="right:617px;top:430px;font-size:12.35px;line-height:15px;color:#333333;font-weight:normal;text-align:right">80 000 000,00</div>
<div class="t" style="right:521px;top:430px;font-size:12.35px;line-height:15px;color:#333333;font-weight:normal;text-align:right">20 000,00</div>
<div class="a" style="left:38px;top:460px;width:1330px;height:1px;background:#b4d0c6"></div>
<div class="a" style="left:247px;top:445px;width:1px;height:15px;background:#b4d0c6"></div>
<div class="a" style="left:460px;top:445px;width:1px;height:15px;background:#b4d0c6"></div>
<div class="a" style="left:530px;top:445px;width:1px;height:15px;background:#b4d0c6"></div>
<div class="a" style="left:670px;top:445px;width:1px;height:15px;background:#b4d0c6"></div>
<div class="a" style="left:810px;top:445px;width:1px;height:15px;background:#b4d0c6"></div>
<div class="a" style="left:906px;top:445px;width:1px;height:15px;background:#b4d0c6"></div>
<div class="a" style="left:1042px;top:445px;width:1px;height:15px;background:#b4d0c6"></div>
<div class="a" style="left:1178px;top:445px;width:1px;height:15px;background:#b4d0c6"></div>
<div class="a" style="left:1271px;top:445px;width:1px;height:15px;background:#b4d0c6"></div>
<div class="a" style="left:1367px;top:445px;width:1px;height:15px;background:#b4d0c6"></div>
<div class="t" style="left:250px;top:446px;font-size:12.35px;line-height:15px;color:#333333;font-weight:normal;">Модуль ПАО</div>
<div class="t" style="right:897px;top:446px;font-size:12.35px;line-height:15px;color:#333333;font-weight:normal;text-align:right">100,00</div>
<div class="t" style="right:757px;top:446px;font-size:12.35px;line-height:15px;color:#333333;font-weight:normal;text-align:right">50 000 000,00</div>
<div class="t" style="right:617px;top:446px;font-size:12.35px;line-height:15px;color:#333333;font-weight:normal;text-align:right">50 000 000,00</div>
<div class="t" style="right:521px;top:446px;font-size:12.35px;line-height:15px;color:#333333;font-weight:normal;text-align:right">5 000,00</div>
<div class="a" style="left:38px;top:476px;width:1330px;height:1px;background:#b4d0c6"></div>
<div class="a" style="left:247px;top:461px;width:1px;height:15px;background:#b4d0c6"></div>
<div class="a" style="left:460px;top:461px;width:1px;height:15px;background:#b4d0c6"></div>
<div class="a" style="left:530px;top:461px;width:1px;height:15px;background:#b4d0c6"></div>
<div class="a" style="left:670px;top:461px;width:1px;height:15px;background:#b4d0c6"></div>
<div class="a" style="left:810px;top:461px;width:1px;height:15px;background:#b4d0c6"></div>
<div class="a" style="left:906px;top:461px;width:1px;height:15px;background:#b4d0c6"></div>
<div class="a" style="left:1042px;top:461px;width:1px;height:15px;background:#b4d0c6"></div>
<div class="a" style="left:1178px;top:461px;width:1px;height:15px;background:#b4d0c6"></div>
<div class="a" style="left:1271px;top:461px;width:1px;height:15px;background:#b4d0c6"></div>
<div class="a" style="left:1367px;top:461px;width:1px;height:15px;background:#b4d0c6"></div>
<div class="t" style="left:250px;top:462px;font-size:12.35px;line-height:15px;color:#333333;font-weight:normal;">Палесора Патнешип</div>
<div class="t" style="right:897px;top:462px;font-size:12.35px;line-height:15px;color:#333333;font-weight:normal;text-align:right">100,00</div>
<div class="t" style="right:757px;top:462px;font-size:12.35px;line-height:15px;color:#333333;font-weight:normal;text-align:right">200 000,00</div>
<div class="t" style="right:617px;top:462px;font-size:12.35px;line-height:15px;color:#333333;font-weight:normal;text-align:right">200 000,00</div>
<div class="a" style="left:38px;top:492px;width:1330px;height:1px;background:#b4d0c6"></div>
<div class="a" style="left:247px;top:477px;width:1px;height:15px;background:#b4d0c6"></div>
<div class="a" style="left:460px;top:477px;width:1px;height:15px;background:#b4d0c6"></div>
<div class="a" style="left:530px;top:477px;width:1px;height:15px;background:#b4d0c6"></div>
<div class="a" style="left:670px;top:477px;width:1px;height:15px;background:#b4d0c6"></div>
<div class="a" style="left:810px;top:477px;width:1px;height:15px;background:#b4d0c6"></div>
<div class="a" style="left:906px;top:477px;width:1px;height:15px;background:#b4d0c6"></div>
<div class="a" style="left:1042px;top:477px;width:1px;height:15px;background:#b4d0c6"></div>
<div class="a" style="left:1178px;top:477px;width:1px;height:15px;background:#b4d0c6"></div>
<div class="a" style="left:1271px;top:477px;width:1px;height:15px;background:#b4d0c6"></div>
<div class="a" style="left:1367px;top:477px;width:1px;height:15px;background:#b4d0c6"></div>
<div class="t" style="left:250px;top:478px;font-size:12.35px;line-height:15px;color:#333333;font-weight:normal;">Торговый дом RUS</div>
<div class="t" style="right:897px;top:478px;font-size:12.35px;line-height:15px;color:#333333;font-weight:normal;text-align:right">60,00</div>
<div class="t" style="right:757px;top:478px;font-size:12.35px;line-height:15px;color:#333333;font-weight:normal;text-align:right">5 600 000,00</div>
<div class="t" style="right:617px;top:478px;font-size:12.35px;line-height:15px;color:#333333;font-weight:normal;text-align:right">5 600 000,00</div>
<div class="a" style="left:38px;top:508px;width:1330px;height:1px;background:#b4d0c6"></div>
<div class="a" style="left:247px;top:493px;width:1px;height:15px;background:#b4d0c6"></div>
<div class="a" style="left:460px;top:493px;width:1px;height:15px;background:#b4d0c6"></div>
<div class="a" style="left:530px;top:493px;width:1px;height:15px;background:#b4d0c6"></div>
<div class="a" style="left:670px;top:493px;width:1px;height:15px;background:#b4d0c6"></div>
<div class="a" style="left:810px;top:493px;width:1px;height:15px;background:#b4d0c6"></div>
<div class="a" style="left:906px;top:493px;width:1px;height:15px;background:#b4d0c6"></div>
<div class="a" style="left:1042px;top:493px;width:1px;height:15px;background:#b4d0c6"></div>
<div class="a" style="left:1178px;top:493px;width:1px;height:15px;background:#b4d0c6"></div>
<div class="a" style="left:1271px;top:493px;width:1px;height:15px;background:#b4d0c6"></div>
<div class="a" style="left:1367px;top:493px;width:1px;height:15px;background:#b4d0c6"></div>
<div class="t" style="left:250px;top:494px;font-size:12.35px;line-height:15px;color:#333333;font-weight:normal;">Вирджиния Лтд</div>
<div class="t" style="right:897px;top:494px;font-size:12.35px;line-height:15px;color:#333333;font-weight:normal;text-align:right">28,00</div>
<div class="t" style="right:757px;top:494px;font-size:12.35px;line-height:15px;color:#333333;font-weight:normal;text-align:right">1 000 000,00</div>
<div class="t" style="right:617px;top:494px;font-size:12.35px;line-height:15px;color:#333333;font-weight:normal;text-align:right">1 000 000,00</div>
<div class="a" style="left:38px;top:509px;width:1329px;height:16px;background:#d8e4cc"></div>
<div class="a" style="left:38px;top:525px;width:1330px;height:1px;background:#a0a0a0"></div>
<div class="a" style="left:37px;top:508px;width:1331px;height:1px;background:#a0a0a0"></div>
<div class="a" style="left:247px;top:509px;width:1px;height:17px;background:#a0a0a0"></div>
<div class="a" style="left:460px;top:509px;width:1px;height:17px;background:#a0a0a0"></div>
<div class="a" style="left:530px;top:509px;width:1px;height:17px;background:#a0a0a0"></div>
<div class="a" style="left:670px;top:509px;width:1px;height:17px;background:#a0a0a0"></div>
<div class="a" style="left:810px;top:509px;width:1px;height:17px;background:#a0a0a0"></div>
<div class="a" style="left:906px;top:509px;width:1px;height:17px;background:#a0a0a0"></div>
<div class="a" style="left:1042px;top:509px;width:1px;height:17px;background:#a0a0a0"></div>
<div class="a" style="left:1178px;top:509px;width:1px;height:17px;background:#a0a0a0"></div>
<div class="a" style="left:1271px;top:509px;width:1px;height:17px;background:#a0a0a0"></div>
<div class="a" style="left:1367px;top:509px;width:1px;height:17px;background:#a0a0a0"></div>
<div class="t" style="left:41px;top:510px;font-size:12.75px;line-height:16px;color:#0c3b2e;font-weight:bold;">Итого</div>
<div class="t" style="right:897px;top:510px;font-size:12.75px;line-height:16px;color:#0c3b2e;font-weight:bold;text-align:right">818,00</div>
<div class="t" style="right:757px;top:510px;font-size:12.75px;line-height:16px;color:#0c3b2e;font-weight:bold;text-align:right">326 500 000,00</div>
<div class="t" style="right:617px;top:510px;font-size:12.75px;line-height:16px;color:#0c3b2e;font-weight:bold;text-align:right">322 300 000,00</div>
<div class="t" style="right:521px;top:510px;font-size:12.75px;line-height:16px;color:#0c3b2e;font-weight:bold;text-align:right">30 280,00</div>
<div class="t" style="right:385px;top:510px;font-size:12.75px;line-height:16px;color:#0c3b2e;font-weight:bold;text-align:right">10,00</div>
<div class="t" style="right:249px;top:510px;font-size:12.75px;line-height:16px;color:#0c3b2e;font-weight:bold;text-align:right">20,00</div>
<div class="a" style="left:12px;top:219px;width:11px;height:11px;box-sizing:border-box;border:1px solid #a4a4a4;border-radius:1.5px;background:#fff"></div>
<div class="a" style="left:14px;top:224px;width:7px;height:1px;background:#222"></div>
<div class="a" style="left:17px;top:230px;width:1px;height:18px;background:#a0a0a0"></div>
<div class="a" style="left:17px;top:248px;width:20px;height:1px;background:#a0a0a0"></div>
<div class="a" style="left:12px;top:252px;width:11px;height:11px;box-sizing:border-box;border:1px solid #a4a4a4;border-radius:1.5px;background:#fff"></div>
<div class="a" style="left:14px;top:257px;width:7px;height:1px;background:#222"></div>
<div class="a" style="left:17px;top:263px;width:1px;height:34px;background:#a0a0a0"></div>
<div class="a" style="left:17px;top:297px;width:20px;height:1px;background:#a0a0a0"></div>
<div class="a" style="left:12px;top:301px;width:11px;height:11px;box-sizing:border-box;border:1px solid #a4a4a4;border-radius:1.5px;background:#fff"></div>
<div class="a" style="left:14px;top:306px;width:7px;height:1px;background:#222"></div>
<div class="a" style="left:17px;top:312px;width:1px;height:18px;background:#a0a0a0"></div>
<div class="a" style="left:17px;top:330px;width:20px;height:1px;background:#a0a0a0"></div>
<div class="a" style="left:12px;top:334px;width:11px;height:11px;box-sizing:border-box;border:1px solid #a4a4a4;border-radius:1.5px;background:#fff"></div>
<div class="a" style="left:14px;top:339px;width:7px;height:1px;background:#222"></div>
<div class="a" style="left:17px;top:345px;width:1px;height:18px;background:#a0a0a0"></div>
<div class="a" style="left:17px;top:363px;width:20px;height:1px;background:#a0a0a0"></div>
<div class="a" style="left:12px;top:367px;width:11px;height:11px;box-sizing:border-box;border:1px solid #a4a4a4;border-radius:1.5px;background:#fff"></div>
<div class="a" style="left:14px;top:372px;width:7px;height:1px;background:#222"></div>
<div class="a" style="left:17px;top:378px;width:1px;height:130px;background:#a0a0a0"></div>
<div class="a" style="left:17px;top:508px;width:20px;height:1px;background:#a0a0a0"></div>
<div class="a" style="left:461px;top:315px;width:69px;height:15px;background:#f0f0f0"></div>
<div class="t" style="right:896px;top:316px;font-size:12.35px;line-height:15px;color:#333333;font-weight:normal;text-align:right">100,00</div>
<div class="a" style="left:457px;top:311px;width:77px;height:23px;box-sizing:border-box;border:2px solid #fbbf00"></div>
<svg class="a" style="left:1400px;top:134px" width="8" height="6" viewBox="0 0 8 6"><path d="M1 5 L4 1 L7 5Z" fill="#c4c4c4"/></svg>
<div class="a" style="left:1400px;top:149px;width:8px;height:378px;border-radius:4px;background:#d4d4d4"></div>
<div class="a" style="left:1400px;top:149px;width:8px;height:239px;border-radius:4px;background:#9a9a9a"></div>
<svg class="a" style="left:1400px;top:536px" width="8" height="6" viewBox="0 0 8 6"><path d="M1 1 L4 5 L7 1Z" fill="#555"/></svg>
<svg class="a" style="left:17px;top:553px" width="6" height="8" viewBox="0 0 6 8"><path d="M5 1 L1 4 L5 7Z" fill="#c4c4c4"/></svg>
<div class="a" style="left:32px;top:553px;width:1342px;height:8px;border-radius:4px;background:#d4d4d4"></div>
<div class="a" style="left:32px;top:553px;width:1225px;height:8px;border-radius:4px;background:#9a9a9a"></div>
<svg class="a" style="left:1383px;top:553px" width="6" height="8" viewBox="0 0 6 8"><path d="M1 1 L5 4 L1 7Z" fill="#555"/></svg>
</body></html>
